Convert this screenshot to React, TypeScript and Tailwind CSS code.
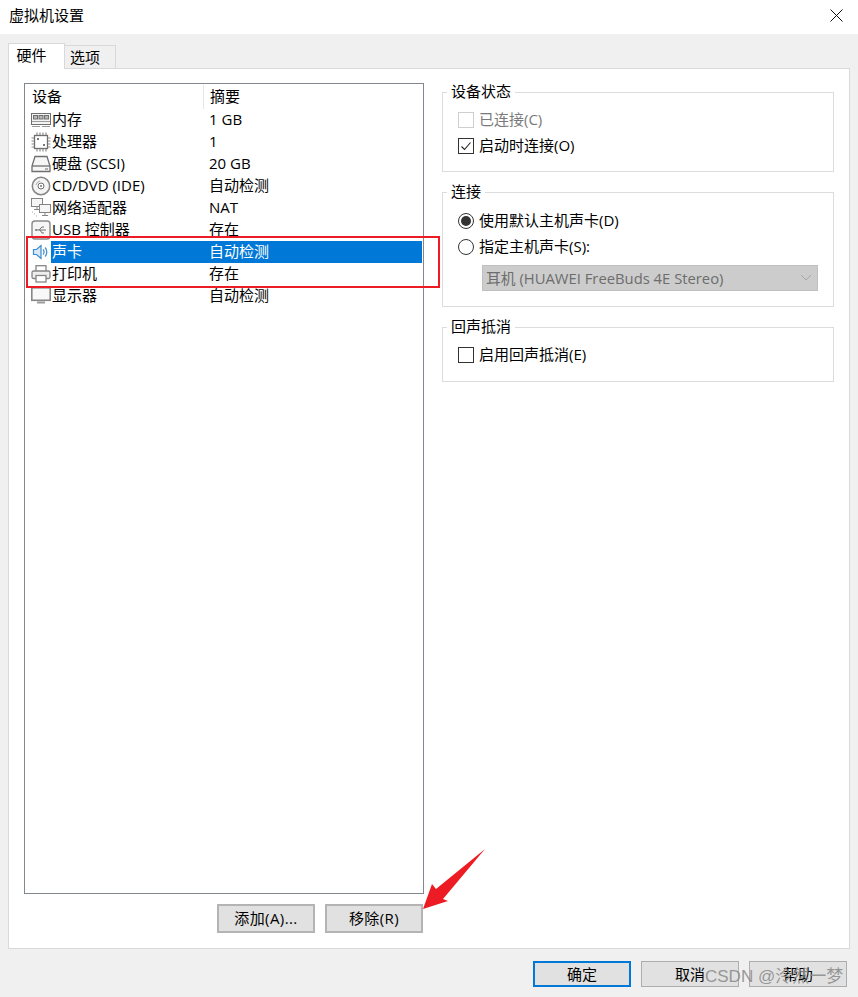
import React from 'react';

const FONT = '"Open Sans", "Noto Sans CJK SC", sans-serif';

const stroke = '#6f6f6f';

const MemoryIcon = () => (
  <svg width="20" height="16" viewBox="0 0 20 16" fill="none" stroke={stroke}>
    <rect x="0.5" y="1.5" width="19" height="11" fill="#f4f4f4" />
    <rect x="2.5" y="3.5" width="4" height="3.5" fill="#b9b9b9" />
    <rect x="8" y="3.5" width="4" height="3.5" fill="#b9b9b9" />
    <rect x="13.5" y="3.5" width="4" height="3.5" fill="#b9b9b9" />
    <path d="M1 9.5h18M1 14.5h8M11 14.5h8" stroke="#9a9a9a" />
  </svg>
);

const CpuIcon = () => (
  <svg width="20" height="20" viewBox="0 0 20 20" fill="none" stroke={stroke}>
    <rect x="3.5" y="3.5" width="13" height="13" fill="#fff" strokeWidth="1.3" />
    <path d="M6 0.5v2.5M9 0.5v2.5M12 0.5v2.5M15 0.5v2.5M6 17v2.5M9 17v2.5M12 17v2.5M15 17v2.5M0.5 6H3M0.5 9H3M0.5 12H3M0.5 15H3M17 6h2.5M17 9h2.5M17 12h2.5M17 15h2.5" stroke="#8a8a8a" strokeWidth="1.2" />
    <rect x="6" y="6" width="2" height="2" fill="#777" stroke="none" />
    <rect x="12" y="12" width="2" height="2" fill="#777" stroke="none" />
  </svg>
);

const DiskIcon = () => (
  <svg width="20" height="18" viewBox="0 0 20 18" fill="none" stroke={stroke} strokeWidth="1.3">
    <path d="M4 1.5h12l3 9.5v5.5H1V11z" fill="#f6f6f6" />
    <path d="M1 11h18" />
    <path d="M14 14h3" stroke="#8a8a8a" />
  </svg>
);

const CdIcon = () => (
  <svg width="20" height="20" viewBox="0 0 20 20" fill="none" stroke={stroke}>
    <circle cx="10" cy="10" r="8.7" fill="#f4f4f4" stroke="#858585" strokeWidth="1.5" />
    <circle cx="10" cy="10" r="3" fill="#fff" />
    <circle cx="10" cy="10" r="1" fill="#777" stroke="none" />
    <path d="M5 9a5 5 0 0 1 4-4" stroke="#aaa" />
  </svg>
);

const NetworkIcon = () => (
  <svg width="20" height="20" viewBox="0 0 20 20" fill="none" stroke="#858585">
    <rect x="0.5" y="0.5" width="11" height="8" fill="#f6f6f6" />
    <path d="M6 8.5v3M3 11.5h6" />
    <rect x="8.5" y="6.5" width="11" height="8" fill="#f6f6f6" />
    <path d="M14 14.5v3M11 17.5h6" />
    <path d="M1 14h1M3 16h1M5 18h1" stroke="#aaa" />
  </svg>
);

const UsbIcon = () => (
  <svg width="20" height="20" viewBox="0 0 20 20" fill="none" stroke={stroke}>
    <rect x="1" y="1" width="18" height="18" rx="3" fill="#f6f6f6" stroke="#8a8a8a" strokeWidth="1.4" />
    <path d="M5 10h10M8 10l3-3h2M9 10l2 3h2" />
    <circle cx="5" cy="10" r="1" fill="#777" stroke="none" />
  </svg>
);

const SpeakerIcon = () => (
  <svg width="18" height="18" viewBox="0 0 18 18" fill="none">
    <path d="M1.5 6.5h3l4.5-4v13l-4.5-4h-3z" fill="#d9e9f7" stroke="#3f8bc9" strokeWidth="1.2" />
    <path d="M11 6.5a3.5 3.5 0 0 1 0 5M13 4.5a6.5 6.5 0 0 1 0 9" stroke="#3f8bc9" strokeWidth="1.2" />
  </svg>
);

const PrinterIcon = () => (
  <svg width="20" height="18" viewBox="0 0 20 18" fill="none" stroke="#858585" strokeWidth="1.3">
    <rect x="5" y="0.7" width="10" height="6" fill="#fff" />
    <rect x="1" y="6" width="18" height="7.5" rx="1.5" fill="#eeeeee" />
    <rect x="5" y="10.5" width="10" height="6.5" fill="#fff" />
  </svg>
);

const MonitorIcon = () => (
  <svg width="20" height="18" viewBox="0 0 20 18" fill="none" stroke="#858585">
    <rect x="0.8" y="0.8" width="18.4" height="12.5" fill="#f8f8f8" strokeWidth="1.6" />
    <path d="M6 15.5h8" strokeWidth="2" stroke="#9a9a9a" />
  </svg>
);

const devices = [
  { name: '内存', summary: '1 GB', icon: <MemoryIcon /> },
  { name: '处理器', summary: '1', icon: <CpuIcon /> },
  { name: '硬盘 (SCSI)', summary: '20 GB', icon: <DiskIcon /> },
  { name: 'CD/DVD (IDE)', summary: '自动检测', icon: <CdIcon /> },
  { name: '网络适配器', summary: 'NAT', icon: <NetworkIcon /> },
  { name: 'USB 控制器', summary: '存在', icon: <UsbIcon /> },
  { name: '声卡', summary: '自动检测', icon: <SpeakerIcon />, selected: true },
  { name: '打印机', summary: '存在', icon: <PrinterIcon /> },
  { name: '显示器', summary: '自动检测', icon: <MonitorIcon /> },
];

const GroupBox = ({ title, height, children }: { title: string; height: string; children: React.ReactNode }) => (
  <div className={`relative border border-[#dcdcdc] ${height} pl-[15px]`}>
    <span className="absolute left-[4px] top-[-12px] bg-white px-[4px] text-[15px] leading-[20px]">{title}</span>
    {children}
  </div>
);

const Check = ({ label, checked, disabled }: { label: string; checked?: boolean; disabled?: boolean }) => (
  <div className={`flex h-[26px] items-center gap-[5px] text-[15px] ${disabled ? 'text-[#7a7a7a]' : ''}`}>
    <div className={`flex h-[16px] w-[16px] items-center justify-center border bg-white ${disabled ? 'border-[#cfcfcf]' : 'border-[#333333]'}`}>
      {checked && (
        <svg width="12" height="12" viewBox="0 0 12 12" fill="none" stroke="#222" strokeWidth="1.1">
          <path d="M1.5 6.5l3 3 6-7" />
        </svg>
      )}
    </div>
    <span className="pb-[1px]">{label}</span>
  </div>
);

const Radio = ({ label, checked }: { label: string; checked?: boolean }) => (
  <div className="flex h-[26px] items-center gap-[5px] text-[15px]">
    <div className="flex h-[16px] w-[16px] items-center justify-center rounded-full border border-[#333333] bg-white">
      {checked && <div className="h-[10px] w-[10px] rounded-full bg-[#333333]" />}
    </div>
    <span className="pb-[2px]">{label}</span>
  </div>
);

const Button = ({ label, primary }: { label: string; primary?: boolean }) => (
  <div
    className={`flex h-[26px] w-[98px] items-center justify-center bg-[#e1e1e1] text-[15px] ${
      primary ? 'border-2 border-[#0078d7]' : 'border border-[#adadad]'
    }`}
  >
    {label}
  </div>
);

export default function App() {
  return (
    <div className="relative flex h-[997px] w-[858px] flex-col overflow-hidden bg-[#f0f0f0] text-black" style={{ fontFamily: FONT }}>
      {/* title bar */}
      <div className="flex h-[34px] items-center justify-between bg-white pb-[4px] pl-[9px] pr-[15px]">
        <span className="text-[15px]">虚拟机设置</span>
        <svg width="13" height="13" viewBox="0 0 13 13" stroke="#111" fill="none">
          <path d="M0.5 0.5l12 12M12.5 0.5l-12 12" />
        </svg>
      </div>

      {/* tabs */}
      <div className="flex items-end pl-[8px] pt-[9px]">
        <div className="z-10 mb-[-1px] flex h-[26px] w-[57px] items-center justify-center border border-b-0 border-[#d9d9d9] bg-white pb-[2px] pr-[10px] text-[15px]">
          硬件
        </div>
        <div className="flex h-[23px] w-[51px] items-center justify-center border border-b-0 border-l-0 border-[#d9d9d9] bg-[#f0f0f0] pr-[10px] text-[15px]">
          选项
        </div>
      </div>

      {/* panel */}
      <div className="ml-[8px] flex h-[881px] w-[842px] gap-[18px] border border-[#d9d9d9] bg-white pl-[15px] pt-[14px]">
        <div className="flex w-[400px] flex-col">
          <div className="flex h-[811px] flex-col border border-[#828790] px-[1px]">
            <div className="flex h-[25px] items-center text-[15px]">
              <span className="w-[177px] pl-[6px]">设备</span>
              <span className="h-[24px] border-l border-[#e5e5e5] pl-[6px] leading-[22px]">摘要</span>
            </div>
            {devices.map((d) => (
              <div key={d.name} className="flex h-[22px] items-center text-[15px]">
                <div className="flex w-[25px] shrink-0 items-center justify-center pl-[4px]">{d.icon}</div>
                <div className={`flex h-[22px] flex-1 items-center pb-[1px] ${d.selected ? 'bg-[#0078d7] text-white' : ''}`}>
                  <span className="w-[158px] whitespace-nowrap pl-[1px]">{d.name}</span>
                  <span>{d.summary}</span>
                </div>
              </div>
            ))}
          </div>
          <div className="mt-[10px] flex justify-end gap-[10px] pr-[1px]">
            <div className="flex h-[29px] w-[98px] items-center justify-center border-2 border-[#b4b4b4] bg-[#e1e1e1] text-[15px] tracking-[0.4px]">添加(A)...</div>
            <div className="flex h-[29px] w-[98px] items-center justify-center border-2 border-[#b4b4b4] bg-[#e1e1e1] text-[15px] tracking-[0.4px]">移除(R)</div>
          </div>
        </div>

        <div className="flex w-[392px] flex-col gap-[20px] pt-[9px]">
          <GroupBox title="设备状态" height="h-[80px]">
            <div className="pt-[14px]">
              <Check label="已连接(C)" disabled />
              <Check label="启动时连接(O)" checked />
            </div>
          </GroupBox>
          <GroupBox title="连接" height="h-[115px]">
            <div className="pt-[15px]">
              <Radio label="使用默认主机声卡(D)" checked />
              <Radio label="指定主机声卡(S):" />
              <div className="ml-[24px] mt-[5px] flex h-[26px] w-[336px] items-center justify-between border border-[#c0c0c0] bg-[#cccccc] pl-[3px] pr-[5px] text-[14.8px] text-[#6d6d6d]">
                <span>耳机 (HUAWEI FreeBuds 4E Stereo)</span>
                <svg width="12" height="8" viewBox="0 0 12 8" fill="none" stroke="#a8a8a8">
                  <path d="M1 1l5 5 5-5" />
                </svg>
              </div>
            </div>
          </GroupBox>
          <GroupBox title="回声抵消" height="h-[55px]">
            <div className="pt-[14px]">
              <Check label="启用回声抵消(E)" />
            </div>
          </GroupBox>
        </div>
      </div>

      {/* footer */}
      <div className="flex justify-end gap-[10px] pr-[11px] pt-[12px]">
        <Button label="确定" primary />
        <Button label="取消" />
        <Button label="帮助" />
      </div>

      {/* annotation: red frame, arrow, watermark */}
      <div className="absolute left-[26px] top-[236px] h-[52px] w-[414px] border-2 border-[#ed1c24]" />
      <svg className="absolute left-[420px] top-[846px]" width="68" height="66" viewBox="0 0 68 66">
        <path d="M65 3L16 43l-4-5-9 25 25-8-5-2z" fill="#ed1c24" />
      </svg>
      <span className="absolute left-[705px] top-[967px] whitespace-nowrap text-[17px] leading-[20px] text-[#8c8c8c]/90" style={{ fontFamily: '"Liberation Sans", "Noto Sans CJK SC", sans-serif' }}>
        CSDN @泠然一梦
      </span>
    </div>
  );
}
